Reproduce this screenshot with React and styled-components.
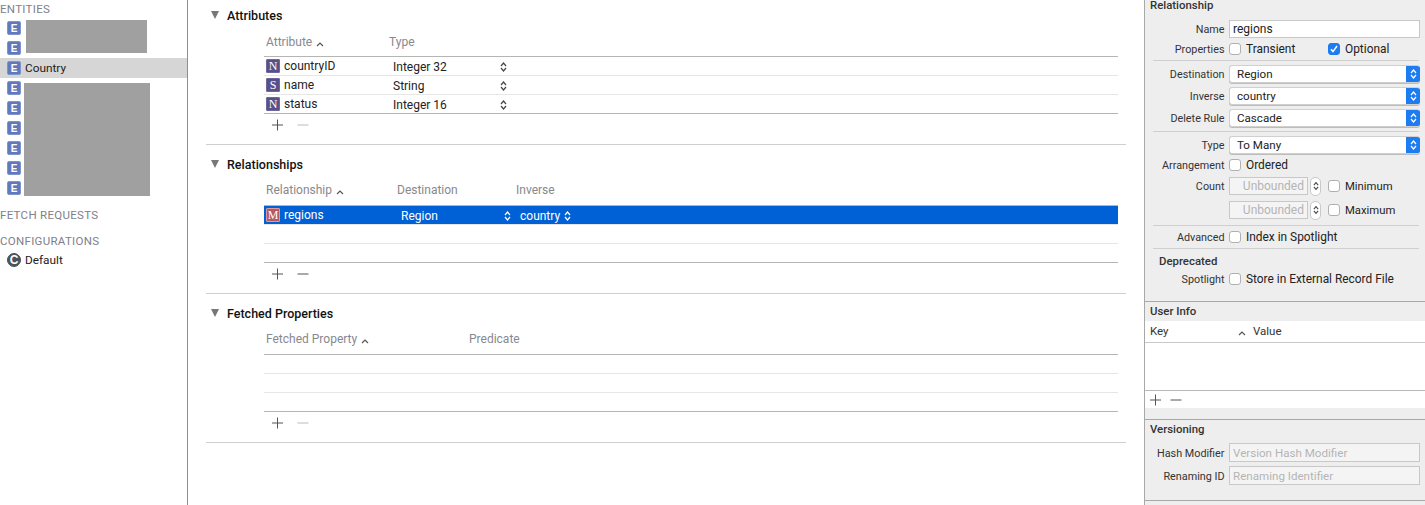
import React from 'react';
import styled, { createGlobalStyle } from 'styled-components';

const GlobalStyle = createGlobalStyle`
  html, body { margin: 0; padding: 0; background: #fff; }
  body {
    font-family: Roboto, "Liberation Sans", sans-serif;
    font-size: 12px;
    color: #222;
    overflow: hidden;
  }
`;

const Page = styled.div`
  display: flex;
  width: 1425px;
  height: 505px;
  overflow: hidden;
`;

/* left list of entities */
const Sidebar = styled.aside`
  position: relative;
  width: 187px;
  height: 505px;
  border-right: 1px solid #8f8f8f;
  flex: none;
`;

const GroupTitle = styled.div`
  height: 14px;
  line-height: 14px;
  padding-top: ${p => p.$top || 0}px;
  margin-bottom: ${p => p.$bottom || 0}px;
  color: #80808a;
  font-size: 11.5px;
  letter-spacing: 0.3px;
`;

const EntityRow = styled.div`
  display: flex;
  align-items: center;
  gap: 4px;
  height: 20px;
  padding-left: 7px;
  font-size: 11.8px;
  background: ${p => (p.$active ? '#d6d6d6' : 'transparent')};
`;

const EntityBadge = styled.span`
  display: flex;
  align-items: center;
  justify-content: center;
  width: 14px;
  height: 14px;
  box-sizing: border-box;
  border-radius: 2px;
  background: #5f79bc;
  border: 1px solid #7f94cc;
  color: #fff;
  font: bold 10px "Liberation Sans", sans-serif;
`;

const ConfigBadge = styled(EntityBadge)`
  border-radius: 50%;
  background: #4a5459;
  border-color: #4a5459;
  font-size: 12px;
`;

const Redaction = styled.div`
  position: absolute;
  left: ${p => p.$x}px;
  top: ${p => p.$y}px;
  width: ${p => p.$w}px;
  height: ${p => p.$h}px;
  background: #a0a0a0;
`;

/* centre editor */
const Editor = styled.main`
  width: 956px;
  flex: none;
  padding-left: 18px;
  box-sizing: border-box;
`;

const Section = styled.section`
  width: 920px;
  height: ${p => p.$h}px;
  box-sizing: border-box;
  border-bottom: 1px solid #cfcfcf;
`;

const SectionHeader = styled.div`
  display: flex;
  align-items: center;
  gap: 8px;
  height: ${p => p.$h}px;
  padding-left: 5px;
  font-size: 12.5px;
  font-weight: 500;
  color: #111;
`;

const Triangle = styled.span`
  width: 0;
  height: 0;
  border-left: 4.5px solid transparent;
  border-right: 4.5px solid transparent;
  border-top: 8px solid #777;
`;

const Table = styled.div`
  margin-left: 58px;
  width: 854px;
`;

const HeadRow = styled.div`
  height: ${p => p.$h}px;
  box-sizing: border-box;
  padding-bottom: ${p => p.$pb}px;
  border-bottom: 1px solid #b5b5b5;
  display: flex;
  align-items: center;
  color: #88888f;
  font-size: 12px;
`;

const HeadCell = styled.div`
  display: flex;
  align-items: center;
  gap: 4px;
  padding-left: 2px;
  width: ${p => p.$w}px;
  box-sizing: border-box;
`;

const BodyRow = styled.div`
  display: flex;
  align-items: center;
  height: 18px;
  border-bottom: 1px solid ${p => (p.$last ? '#b5b5b5' : '#e6e6e6')};
  background: ${p => (p.$selected ? '#0060d5' : 'transparent')};
  color: ${p => (p.$selected ? '#fff' : '#222')};
`;

const NameCell = styled.div`
  display: flex;
  align-items: center;
  gap: 4px;
  padding-left: 2px;
  width: ${p => p.$w}px;
  box-sizing: border-box;
`;

const TypeBadge = styled.span`
  display: flex;
  align-items: center;
  justify-content: center;
  width: 14px;
  height: 14px;
  box-sizing: border-box;
  border-radius: 1px;
  background: ${p => p.$bg};
  border: 1px solid ${p => p.$edge};
  color: #fff;
  font: 12px "Liberation Serif", serif;
`;

const ValueCell = styled.div`
  display: flex;
  align-items: center;
  justify-content: space-between;
  width: ${p => p.$w}px;
  padding: 1px 0 0 ${p => p.$pl || 0}px;
  box-sizing: border-box;
  svg { flex: none; }
`;

const PlusMinus = styled.div`
  display: flex;
  align-items: center;
  gap: 13px;
  height: 22px;
  padding-left: 8px;
`;

const Stroke = styled.svg`
  display: block;
  width: 12px;
  height: 12px;
`;

/* right inspector */
const Inspector = styled.aside`
  width: 281px;
  height: 505px;
  flex: none;
  box-sizing: border-box;
  border-left: 1px solid #a8a8a8;
  background: #eeeeee;
  color: #333;
`;

const PanelTitle = styled.div`
  height: ${p => p.$h || 11}px;
  line-height: ${p => p.$h || 11}px;
  padding-left: ${p => p.$left || 5}px;
  margin-top: ${p => p.$top || 0}px;
  font-weight: 500;
  font-size: 11.4px;
  color: #333;
`;

const FormRow = styled.div`
  display: flex;
  align-items: center;
  height: ${p => p.$h || 18}px;
  margin-top: ${p => p.$top || 0}px;
  padding-right: 5px;
`;

const Label = styled.label`
  width: 79.5px;
  flex: none;
  text-align: right;
  margin-right: 4.5px;
  padding-top: ${p => p.$nudge || 0}px;
  font-size: 10.8px;
`;

const TextField = styled.div`
  flex: ${p => (p.$w ? 'none' : 1)};
  width: ${p => (p.$w ? `${p.$w}px` : 'auto')};
  height: ${p => p.$h || 18}px;
  line-height: ${p => (p.$h || 18) - 1}px;
  box-sizing: border-box;
  padding: 0 3px;
  background: ${p => (p.$plain ? '#f4f4f4' : '#fff')};
  border: 1px solid #c8c8c8;
  color: ${p => (p.$muted ? '#b4b4b4' : '#222')};
  text-align: ${p => (p.$right ? 'right' : 'left')};
  font-size: ${p => p.$size || 12}px;
  white-space: nowrap;
  overflow: hidden;
`;

const Select = styled.div`
  flex: 1;
  display: flex;
  align-items: center;
  justify-content: space-between;
  height: 18px;
  box-sizing: border-box;
  padding-left: 7px;
  background: #fff;
  border-radius: 3px;
  border: 1px solid #d0d0d0;
  border-right: 0;
  box-shadow: 0 1px 0 #bcbcbc;
  color: #222;
  font-size: 11.6px;
  overflow: hidden;
`;

const SelectArrow = styled.span`
  display: flex;
  align-items: center;
  justify-content: center;
  width: 14px;
  height: 18px;
  background: #1c7cf0;
`;

const CheckLabel = styled.span`
  display: flex;
  align-items: center;
  gap: 5px;
  width: ${p => (p.$w ? `${p.$w}px` : 'auto')};
  font-size: ${p => p.$size || 11.9}px;
  color: #222;
`;

const CheckBox = styled.span`
  display: flex;
  align-items: center;
  justify-content: center;
  width: 12px;
  height: 12px;
  box-sizing: border-box;
  border-radius: 3px;
  background: ${p => (p.$on ? '#1c7cf0' : '#fff')};
  border: 1px solid ${p => (p.$on ? '#1c7cf0' : '#b0b0b0')};
`;

const Stepper = styled.span`
  display: flex;
  align-items: center;
  justify-content: center;
  width: 11px;
  height: 19px;
  margin: 0 7px 0 2px;
  box-sizing: border-box;
  background: #fff;
  border: 1px solid #c9c9c9;
  border-radius: 5px;
`;

const Divider = styled.div`
  height: 1px;
  margin: ${p => p.$top || 0}px 6px 0 8px;
  background: #cfcfcf;
`;

const PanelBorder = styled.div`
  height: 1px;
  margin-top: ${p => p.$top || 0}px;
  background: #a8a8a8;
`;

const InfoHead = styled.div`
  display: flex;
  align-items: center;
  height: 19px;
  margin-top: 3px;
  padding: 0 0 2px 5px;
  background: #fff;
  border-bottom: 1px solid #c8c8c8;
  color: #333;
  font-size: 11.5px;
`;

const InfoKey = styled.div`
  width: 88px;
`;

const InfoValue = styled.div`
  display: flex;
  align-items: center;
  gap: 7px;
`;

const InfoBody = styled.div`
  height: 47px;
  background: #fff;
  border-bottom: 1px solid #b8b8b8;
`;

const InfoFooter = styled.div`
  height: 17px;
  background: #fff;
  display: flex;
  align-items: center;
  gap: 8px;
  padding-left: 5px;
`;

const Plus = () => (
  <Stroke viewBox="0 0 12 12">
    <path d="M5.5 0.5v11M0 6h11" stroke="#555" strokeWidth="1" fill="none" />
  </Stroke>
);

const Minus = ({ faded }) => (
  <Stroke viewBox="0 0 12 12">
    <path d="M0.5 6h11" stroke={faded ? '#bbb' : '#555'} strokeWidth="1" fill="none" />
  </Stroke>
);

const SortUp = () => (
  <svg width="8" height="5" viewBox="0 0 8 5" style={{ marginTop: 5 }}>
    <path d="M1 4l3-3 3 3" stroke="#555" strokeWidth="1.2" fill="none" />
  </svg>
);

const UpDown = ({ color = '#444', w = 7, h = 10 }) => (
  <svg width={w} height={h} viewBox="0 0 7 10">
    <path d="M1 4l2.5-3L6 4M1 6l2.5 3L6 6" stroke={color} strokeWidth="1.2" fill="none" />
  </svg>
);

const Check = () => (
  <svg width="8" height="8" viewBox="0 0 8 8">
    <path d="M1 4.2l2 2.4L7 1" stroke="#fff" strokeWidth="1.5" fill="none" />
  </svg>
);

const entitiesAbove = 2;
const entitiesBelow = 6;

const attributes = [
  { badge: 'N', name: 'countryID', type: 'Integer 32' },
  { badge: 'S', name: 'name', type: 'String' },
  { badge: 'N', name: 'status', type: 'Integer 16' },
];

const SelectField = ({ label, value }) => (
  <FormRow $top={4}>
    <Label>{label}</Label>
    <Select>
      {value}
      <SelectArrow>
        <UpDown color="#fff" />
      </SelectArrow>
    </Select>
  </FormRow>
);

const Checkbox = ({ on, children, w, size }) => (
  <CheckLabel $w={w} $size={size}>
    <CheckBox $on={on}>{on && <Check />}</CheckBox>
    {children}
  </CheckLabel>
);

export default function App() {
  return (
    <Page>
      <GlobalStyle />
      <Sidebar>
        <GroupTitle $top={2} $bottom={2}>ENTITIES</GroupTitle>
        {Array.from({ length: entitiesAbove }).map((_, i) => (
          <EntityRow key={i}>
            <EntityBadge>E</EntityBadge>
          </EntityRow>
        ))}
        <EntityRow $active>
          <EntityBadge>E</EntityBadge>
          Country
        </EntityRow>
        {Array.from({ length: entitiesBelow }).map((_, i) => (
          <EntityRow key={i}>
            <EntityBadge>E</EntityBadge>
          </EntityRow>
        ))}
        <GroupTitle $top={10}>FETCH REQUESTS</GroupTitle>
        <GroupTitle $top={12} $bottom={2}>CONFIGURATIONS</GroupTitle>
        <EntityRow>
          <ConfigBadge>C</ConfigBadge>
          Default
        </EntityRow>
        <Redaction $x={26} $y={20} $w={121} $h={33} />
        <Redaction $x={24} $y={83} $w={126} $h={113} />
      </Sidebar>

      <Editor>
        <Section $h={145}>
          <SectionHeader $h={30}>
            <Triangle />
            Attributes
          </SectionHeader>
          <Table>
            <HeadRow $h={27} $pb={2}>
              <HeadCell $w={123}>
                Attribute <SortUp />
              </HeadCell>
              <HeadCell $w={200}>Type</HeadCell>
            </HeadRow>
            {attributes.map((a, i) => (
              <BodyRow key={a.name} $last={i === attributes.length - 1}>
                <NameCell $w={129}>
                  <TypeBadge $bg="#5a5088" $edge="#6f66a0">{a.badge}</TypeBadge>
                  {a.name}
                </NameCell>
                <ValueCell $w={114}>
                  {a.type}
                  <UpDown />
                </ValueCell>
              </BodyRow>
            ))}
            <PlusMinus>
              <Plus />
              <Minus faded />
            </PlusMinus>
          </Table>
        </Section>

        <Section $h={149}>
          <SectionHeader $h={38}>
            <Triangle />
            Relationships
          </SectionHeader>
          <Table>
            <HeadRow $h={23} $pb={8}>
              <HeadCell $w={131}>
                Relationship <SortUp />
              </HeadCell>
              <HeadCell $w={119}>Destination</HeadCell>
              <HeadCell $w={100}>Inverse</HeadCell>
            </HeadRow>
            <BodyRow $selected>
              <NameCell $w={137}>
                <TypeBadge $bg="#b9585f" $edge="#d99a9e">M</TypeBadge>
                regions
              </NameCell>
              <ValueCell $w={110}>
                Region
                <UpDown color="#fff" />
              </ValueCell>
              <ValueCell $w={60} $pl={9}>
                country
                <UpDown color="#fff" />
              </ValueCell>
            </BodyRow>
            <BodyRow />
            <BodyRow $last />
            <PlusMinus>
              <Plus />
              <Minus />
            </PlusMinus>
          </Table>
        </Section>

        <Section $h={149}>
          <SectionHeader $h={38}>
            <Triangle />
            Fetched Properties
          </SectionHeader>
          <Table>
            <HeadRow $h={23} $pb={8}>
              <HeadCell $w={203}>
                Fetched Property <SortUp />
              </HeadCell>
              <HeadCell $w={100}>Predicate</HeadCell>
            </HeadRow>
            <BodyRow />
            <BodyRow />
            <BodyRow $last />
            <PlusMinus>
              <Plus />
              <Minus faded />
            </PlusMinus>
          </Table>
        </Section>
      </Editor>

      <Inspector>
        <PanelTitle>Relationship</PanelTitle>
        <FormRow $top={9}>
          <Label>Name</Label>
          <TextField>regions</TextField>
        </FormRow>
        <FormRow $top={2}>
          <Label>Properties</Label>
          <Checkbox w={99}>Transient</Checkbox>
          <Checkbox on>Optional</Checkbox>
        </FormRow>
        <Divider $top={2} />
        <SelectField label="Destination" value="Region" />
        <SelectField label="Inverse" value="country" />
        <SelectField label="Delete Rule" value="Cascade" />
        <Divider $top={4} />
        <SelectField label="Type" value="To Many" />
        <FormRow $top={2}>
          <Label>Arrangement</Label>
          <Checkbox>Ordered</Checkbox>
        </FormRow>
        <FormRow $top={3}>
          <Label>Count</Label>
          <TextField $w={79} $muted $right $plain>Unbounded</TextField>
          <Stepper><UpDown w={6} h={12} /></Stepper>
          <Checkbox size={11.3}>Minimum</Checkbox>
        </FormRow>
        <FormRow $top={6}>
          <Label />
          <TextField $w={79} $muted $right $plain>Unbounded</TextField>
          <Stepper><UpDown w={6} h={12} /></Stepper>
          <Checkbox size={11.3}>Maximum</Checkbox>
        </FormRow>
        <Divider $top={6} />
        <FormRow $top={2}>
          <Label>Advanced</Label>
          <Checkbox>Index in Spotlight</Checkbox>
        </FormRow>
        <Divider $top={2} />
        <PanelTitle $left={14} $top={7}>Deprecated</PanelTitle>
        <FormRow $top={3}>
          <Label>Spotlight</Label>
          <Checkbox>Store in External Record File</Checkbox>
        </FormRow>
        <PanelBorder $top={13} />
        <PanelTitle $top={2} $h={14}>User Info</PanelTitle>
        <InfoHead>
          <InfoKey>Key</InfoKey>
          <InfoValue>
            <SortUp />
            <span>Value</span>
          </InfoValue>
        </InfoHead>
        <InfoBody />
        <InfoFooter>
          <Plus />
          <Minus />
        </InfoFooter>
        <PanelBorder $top={11} />
        <PanelTitle $top={3} $h={12}>Versioning</PanelTitle>
        <FormRow $top={8} $h={19}>
          <Label $nudge={1}>Hash Modifier</Label>
          <TextField $h={19} $size={11.6} $muted $plain>Version Hash Modifier</TextField>
        </FormRow>
        <FormRow $top={4} $h={19}>
          <Label $nudge={1}>Renaming ID</Label>
          <TextField $h={19} $size={11.6} $muted $plain>Renaming Identifier</TextField>
        </FormRow>
        <PanelBorder $top={15} />
      </Inspector>
    </Page>
  );
}
